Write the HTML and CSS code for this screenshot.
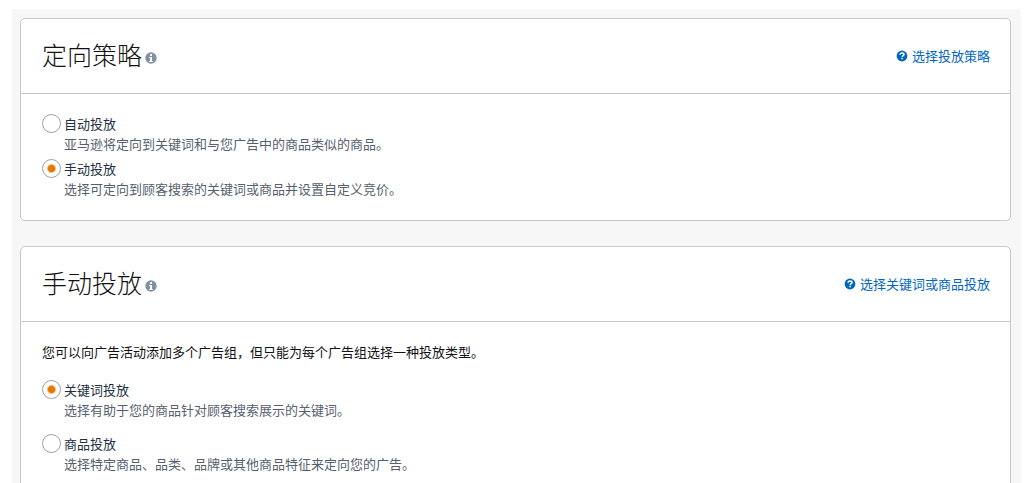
FILE: index.html
```html
<!DOCTYPE html>
<html lang="zh-CN">
<head>
  <meta charset="UTF-8">
  <meta name="viewport" content="width=device-width, initial-scale=1.0">
  <title>定向策略</title>
  <link rel="stylesheet" href="styles.css">
</head>
<body>
  <main class="page">
    <section class="card">
      <header class="card-header">
        <h2 class="card-title">
          定向策略
          <svg class="info-icon" viewBox="0 0 12 12" aria-hidden="true">
            <circle cx="6" cy="6" r="5.7" fill="#8290a4"/>
            <path d="M5 2h2v2H5zM4.2 5H7v4h.8v1H4.2V9H5V6h-.8z" fill="#fff"/>
          </svg>
        </h2>
        <a class="help-link" href="#">
          <svg class="help-icon" viewBox="0 0 12 12" aria-hidden="true">
            <circle cx="6" cy="6" r="5.4" fill="#0066c0"/>
            <path d="M4.1 4.7C4.1 3.4 4.9 2.9 6 2.9s2 .6 2 1.6C8 5.7 6.2 5.7 6.2 7" fill="none" stroke="#fff" stroke-width="1.5"/>
            <path d="M5.4 7.8h1.6v1.5H5.4z" fill="#fff"/>
          </svg>
          选择投放策略
        </a>
      </header>
      <div class="card-body">
        <div class="option">
          <input type="radio" name="strategy" id="strategyAuto">
          <div class="option-text">
            <label for="strategyAuto">自动投放</label>
            <p>亚马逊将定向到关键词和与您广告中的商品类似的商品。</p>
          </div>
        </div>
        <div class="option">
          <input type="radio" name="strategy" id="strategyManual" checked>
          <div class="option-text">
            <label for="strategyManual">手动投放</label>
            <p>选择可定向到顾客搜索的关键词或商品并设置自定义竞价。</p>
          </div>
        </div>
      </div>
    </section>

    <section class="card">
      <header class="card-header">
        <h2 class="card-title">
          手动投放
          <svg class="info-icon" viewBox="0 0 12 12" aria-hidden="true">
            <circle cx="6" cy="6" r="5.7" fill="#8290a4"/>
            <path d="M5 2h2v2H5zM4.2 5H7v4h.8v1H4.2V9H5V6h-.8z" fill="#fff"/>
          </svg>
        </h2>
        <a class="help-link" href="#">
          <svg class="help-icon" viewBox="0 0 12 12" aria-hidden="true">
            <circle cx="6" cy="6" r="5.4" fill="#0066c0"/>
            <path d="M4.1 4.7C4.1 3.4 4.9 2.9 6 2.9s2 .6 2 1.6C8 5.7 6.2 5.7 6.2 7" fill="none" stroke="#fff" stroke-width="1.5"/>
            <path d="M5.4 7.8h1.6v1.5H5.4z" fill="#fff"/>
          </svg>
          选择关键词或商品投放
        </a>
      </header>
      <div class="card-body spaced">
        <p class="intro">您可以向广告活动添加多个广告组，但只能为每个广告组选择一种投放类型。</p>
        <div class="option">
          <input type="radio" name="targeting" id="targetKeyword" checked>
          <div class="option-text">
            <label for="targetKeyword">关键词投放</label>
            <p>选择有助于您的商品针对顾客搜索展示的关键词。</p>
          </div>
        </div>
        <div class="option">
          <input type="radio" name="targeting" id="targetProduct">
          <div class="option-text">
            <label for="targetProduct">商品投放</label>
            <p>选择特定商品、品类、品牌或其他商品特征来定向您的广告。</p>
          </div>
        </div>
      </div>
    </section>
  </main>
</body>
</html>
```
FILE: styles.css
```css
* {
  box-sizing: border-box;
}

body {
  margin: 0;
  padding: 9px 3px 0 12px;
  height: 100vh;
  overflow: hidden;
  background: #fff;
  color: #111;
  font-family: "Noto Sans CJK SC", sans-serif;
  font-size: 13px;
  line-height: 20px;
}

p {
  margin: 0;
}

.page {
  display: flex;
  flex-direction: column;
  gap: 25px;
  min-height: 100%;
  padding: 9px 10px 0 8px;
  background: #f7f7f7;
}

.card {
  background: #fff;
  border: 1px solid #c8c8c8;
  border-radius: 5px;
}

.card-header {
  display: flex;
  align-items: center;
  justify-content: space-between;
  height: 75px;
  padding: 0 20px 0 21px;
  border-bottom: 1px solid #c8c8c8;
}

.card-title {
  display: flex;
  align-items: center;
  gap: 3px;
  margin: 0;
  padding-bottom: 4px;
  font-size: 25px;
  font-weight: 300;
  line-height: 36px;
}

.info-icon {
  width: 12px;
  height: 12px;
  margin-top: 8px;
}

.help-link {
  display: flex;
  align-items: center;
  gap: 4px;
  color: #0066c0;
  text-decoration: none;
}

.help-link:hover {
  text-decoration: underline;
}

.help-icon {
  width: 12px;
  height: 12px;
}

.card-body {
  display: flex;
  flex-direction: column;
  gap: 5px;
  padding: 20px 21px 21px;
}

.card-body.spaced {
  gap: 14px;
}

.intro {
  margin-bottom: 4px;
}

.option {
  display: flex;
  gap: 3px;
}

.option input {
  appearance: none;
  flex: none;
  width: 19px;
  height: 19px;
  margin: 0;
  border: 1px solid #a0a0a0;
  border-radius: 50%;
  background: #fff;
}

.option input:checked {
  background: radial-gradient(circle, #e77600 3px, #fff 5px);
}

.option label {
  display: block;
  color: #232f3e;
}

.option p {
  color: #565f6e;
}
```
